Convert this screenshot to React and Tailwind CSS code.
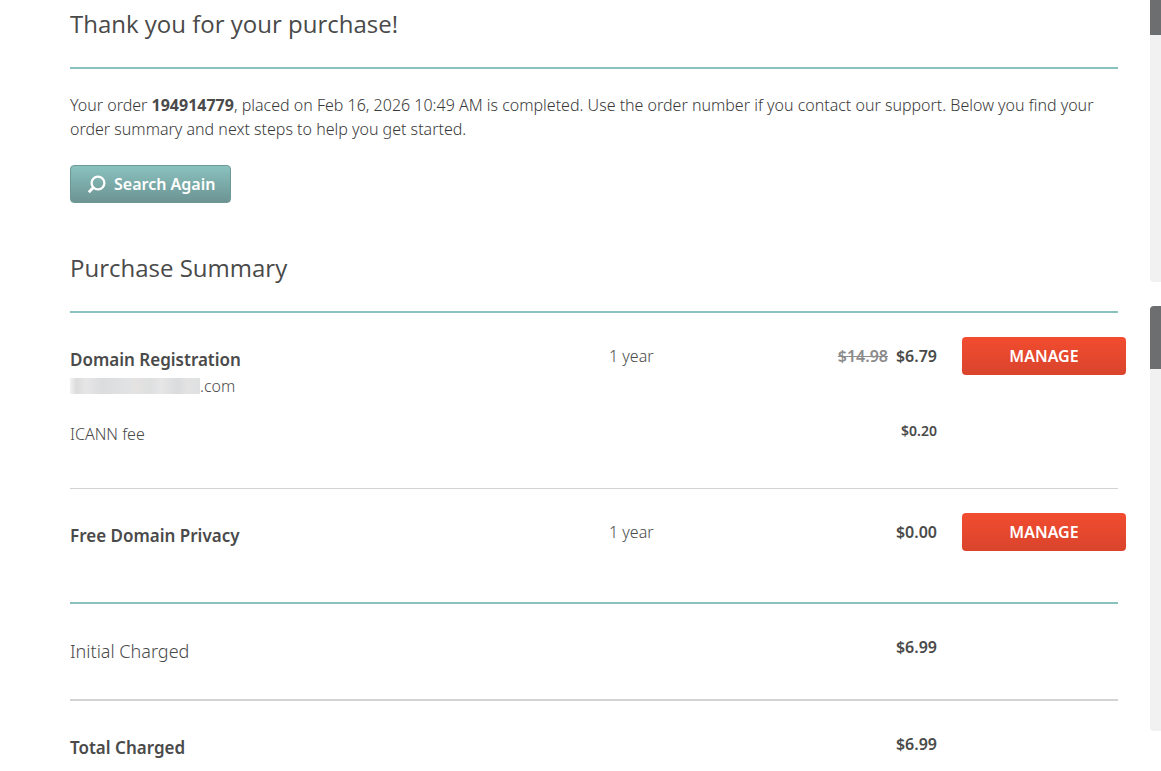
import React from 'react';

const SearchIcon = () => (
  <svg className="size-5" viewBox="0 0 20 20" fill="none" stroke="currentColor" aria-hidden="true">
    <circle cx="12" cy="9" r="6.4" strokeWidth="2.3" />
    <path d="M7.4 13.6L2.8 18.2" strokeWidth="2.8" />
  </svg>
);

// Hides the customer's domain name, only the extension stays readable
const MaskedName = () => (
  <svg className="h-4 w-[130px]" viewBox="0 0 130 16" preserveAspectRatio="none" aria-hidden="true">
    <defs>
      <linearGradient id="mask-fill">
        <stop offset="0" stopColor="#f2f2f2" />
        <stop offset="0.05" stopColor="#dcdcdc" />
        <stop offset="0.12" stopColor="#e6e6e7" />
        <stop offset="0.25" stopColor="#dbdcde" />
        <stop offset="0.43" stopColor="#e0e2e4" />
        <stop offset="0.5" stopColor="#e5e3e2" />
        <stop offset="0.62" stopColor="#dedfe0" />
        <stop offset="0.7" stopColor="#e6e6e7" />
        <stop offset="0.83" stopColor="#dadbdc" />
        <stop offset="0.9" stopColor="#e3e3e3" />
        <stop offset="1" stopColor="#dfe0e1" />
      </linearGradient>
    </defs>
    <rect width="130" height="16" fill="url(#mask-fill)" />
  </svg>
);

const Heading = ({ children }) => (
  <h2 className="border-b-2 border-[#8ac2bf] pt-2 pb-[27px] font-['Open_Sans',sans-serif] text-2xl">
    {children}
  </h2>
);

const ManageButton = ({ item }) => (
  <div className="-mr-2 flex">
    <button
      type="button"
      aria-label={`MANAGE ${item}`}
      className="h-[38px] w-full rounded bg-linear-to-b from-[#f24c30] to-[#d9442c] pb-px text-base font-semibold text-white"
    >
      MANAGE
    </button>
  </div>
);

const ScrollRail = ({ className, thumb }) => (
  <div className={`overflow-hidden bg-[#f1f1f1] ${className}`}>
    <div className={`bg-[#6d6e70] ${thumb}`} />
  </div>
);

const App = () => {
  return (
    <div className="flex items-start overflow-hidden bg-white font-['Noto_Sans',sans-serif] text-base text-[#4a4a4a]">
      <main className="min-w-0 flex-1 pr-8 pl-[70px]">
        <Heading>Thank you for your purchase!</Heading>
        <p className="mt-6 font-light text-[#3a3a3a]">
          Your order <strong className="font-bold text-[#4a4a4a]">194914779</strong>, placed on Feb 16, 2026 10:49 AM
          is completed. Use the order number if you contact our support. Below you find your order summary and next
          steps to help you get started.
        </p>
        <button
          type="button"
          className="mt-6 mb-[41px] flex h-[38px] items-center gap-2 rounded border border-[#6c9997] bg-linear-to-b from-[#8ac2bf] to-[#6c9493] px-[15px] pb-px font-semibold text-white"
        >
          <SearchIcon />
          Search Again
        </button>

        <Heading>Purchase Summary</Heading>
        <table className="w-full table-fixed border-separate border-spacing-0">
          <colgroup>
            <col />
            <col className="w-[148px]" />
            <col className="w-[180px]" />
            <col className="w-[181px]" />
          </colgroup>
          <tbody className="align-top">
            <tr>
              <th scope="row" className="pt-[33px] text-left text-[17px] leading-7 font-semibold">
                Domain Registration
                <div className="flex items-center text-base leading-6 font-light">
                  <MaskedName />
                  .com
                </div>
              </th>
              <td className="pt-[31px] font-light">1 year</td>
              <td className="pt-[31px] text-right font-semibold">
                <s className="mr-2 text-[#8c8c8c]">$14.98</s>
                $6.79
              </td>
              <td className="pt-6 pl-[25px]">
                <ManageButton item="Domain Registration" />
              </td>
            </tr>
            <tr>
              <td className="border-b border-[#d3d3d3] pt-6 pb-[42px] font-light">ICANN fee</td>
              <td className="border-b border-[#d3d3d3]" />
              <td className="border-b border-[#d3d3d3] pt-[21px] text-right text-sm leading-6 font-semibold">$0.20</td>
              <td className="border-b border-[#d3d3d3]" />
            </tr>
            <tr>
              <th
                scope="row"
                className="border-b-2 border-[#8ac2bf] pt-[33px] pb-[52px] text-left text-[17px] leading-7 font-semibold"
              >
                Free Domain Privacy
              </th>
              <td className="border-b-2 border-[#8ac2bf] pt-[31px] font-light">1 year</td>
              <td className="border-b-2 border-[#8ac2bf] pt-[31px] text-right font-semibold">$0.00</td>
              <td className="border-b-2 border-[#8ac2bf] pt-6 pl-[25px]">
                <ManageButton item="Free Domain Privacy" />
              </td>
            </tr>
            <tr>
              <th
                scope="row"
                className="border-b-2 border-[#d3d3d3] pt-[33px] pb-[34px] text-left text-lg leading-7 font-light"
              >
                Initial Charged
              </th>
              <td className="border-b-2 border-[#d3d3d3]" />
              <td className="border-b-2 border-[#d3d3d3] pt-[31px] text-right font-semibold">$6.99</td>
              <td className="border-b-2 border-[#d3d3d3]" />
            </tr>
            <tr>
              <th scope="row" className="pt-[33px] text-left text-[17px] leading-7 font-semibold">
                Total Charged
              </th>
              <td />
              <td className="pt-[31px] text-right font-semibold">$6.99</td>
              <td />
            </tr>
          </tbody>
        </table>
      </main>

      <aside className="flex w-[11px] shrink-0 flex-col gap-6">
        <ScrollRail className="h-[282px] rounded-bl" thumb="h-[35px]" />
        <ScrollRail className="h-[425px] rounded-l" thumb="h-[63px]" />
      </aside>
    </div>
  );
};

export default App;
